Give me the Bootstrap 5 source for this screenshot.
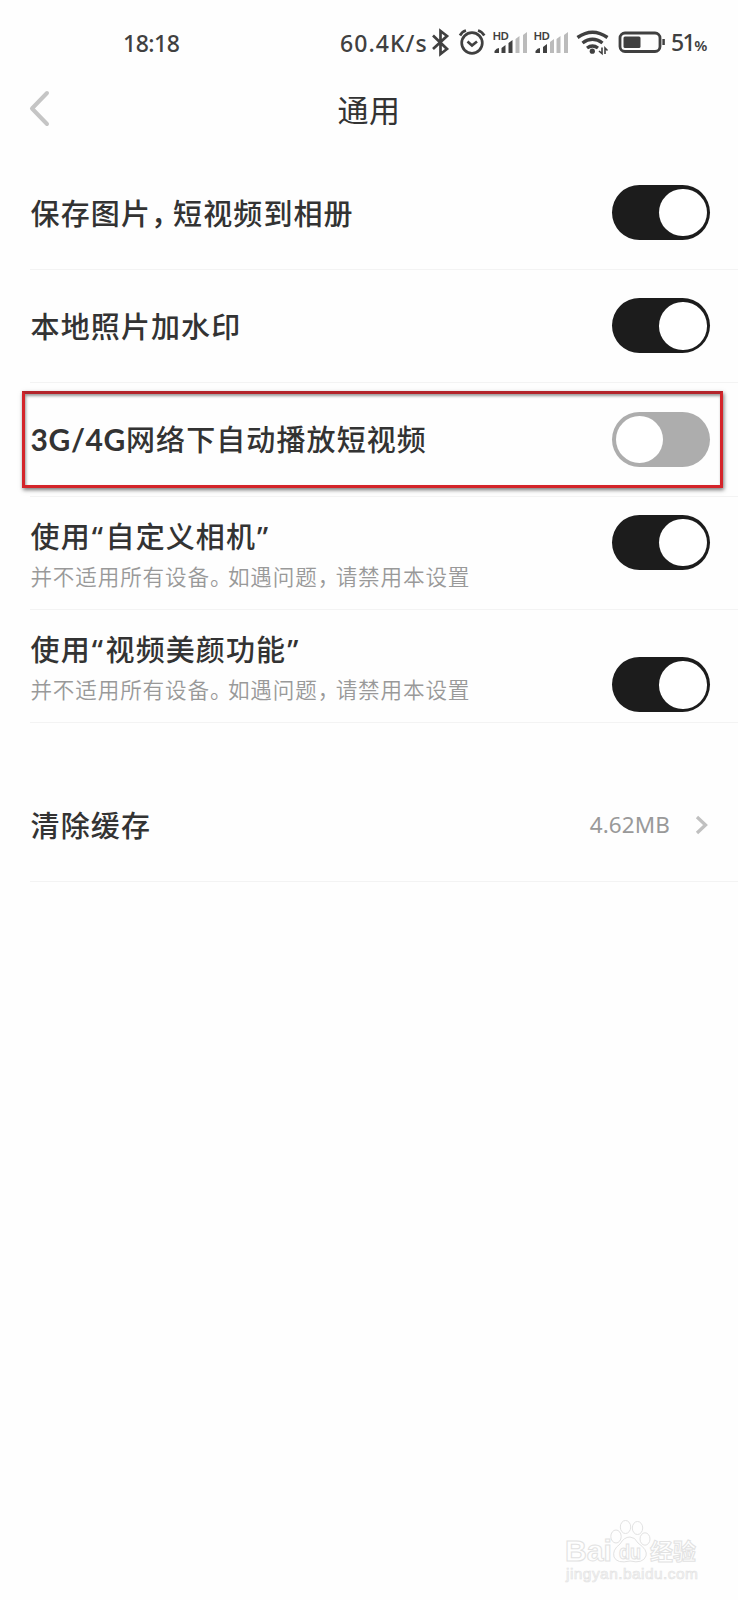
<!DOCTYPE html>
<html lang="zh-CN">
<head>
<meta charset="utf-8">
<meta name="viewport" content="width=device-width, initial-scale=1">
<title>通用</title>
<link href="https://cdn.jsdelivr.net/npm/bootstrap@5.3.0/dist/css/bootstrap.min.css" rel="stylesheet">
<style>
body{background:#fefefe;color:#333;font-family:"Noto Sans","Noto Sans CJK SC",sans-serif}
.screen{width:738px;height:1600px}
.statusbar{height:86px;padding-left:123px;color:#404040;font-size:23px;font-weight:500;line-height:84px}
.clock{width:217px;letter-spacing:-.5px}
.rate{letter-spacing:1.05px;width:90px}
.pct{letter-spacing:-1.6px;font-size:23px;margin-left:6px}
.pct small{font-size:15px;font-weight:600}
.titlebar{height:70.4px;padding-left:29px}
.page-title{left:0;right:0;font-size:31px;line-height:48px;top:0;letter-spacing:.4px}
.setting{height:113.4px;margin-left:30px;padding-right:28px;border-bottom:1.5px solid #f3f3f3}
.label{font:500 29px/44px "Noto Sans CJK SC",sans-serif;letter-spacing:1.1px;white-space:nowrap;padding-left:.6px;padding-bottom:2px}
.latin{font-family:Lato,sans-serif;font-weight:700;font-size:30px;letter-spacing:.6px}
.quote-mark{font-family:"Noto Sans",sans-serif;letter-spacing:2.6px;padding-left:1px}
.hint{font:350 21.6px/32px "Noto Sans CJK SC",sans-serif;letter-spacing:.84px;color:#999;white-space:nowrap;margin-top:-1px;padding-left:.4px}
.tight{font-feature-settings:"halt";margin-right:6.5px}
.tight-sm{font-feature-settings:"halt";margin-right:6.4px}
.toggle{width:98px;height:55px;border-radius:28px;background:#1c1c1c;padding:0 3.5px}
.toggle.off{background:#adadad}
.camera-toggle{margin-top:18.5px}
.beauty-toggle{margin-bottom:10px}
.knob{width:47.5px;height:47.5px;border-radius:50%;background:#fff}
.highlight{left:22px;top:391px;width:701px;height:97px;border:3px solid #d4242a;border-top-color:#b3242b;box-shadow:1px 2px 4px #0008,inset 1px 2px 3px #0006}
.cache{height:112px;margin-top:46.2px}
.size{font-size:22.5px;color:#999;letter-spacing:.1px}
.watermark{right:34px;bottom:14px}
</style>
</head>
<body>
<main class="screen position-relative overflow-hidden">
  <header class="statusbar d-flex align-items-center">
    <span class="clock">18:18</span><span class="rate">60.4K/s</span>
    <svg width="235" height="36" viewBox="430 25 235 36" fill="none" stroke="#404040" class="flex-shrink-0">
      <path d="M433 35.5 447 49 440.5 54V31L447 36 433 49" stroke-width="2.7"/>
      <circle cx="472" cy="43" r="10.3" stroke-width="2.7"/>
      <path d="m467.5 41.5 4.5 4 5-4" stroke-width="2.7"/>
      <path d="M460 35.5q2-3.8 6-5M478 30.5q4 1.2 6.3 5" stroke-width="2.7"/>
      <g fill="#404040" stroke="none">
        <text x="492.5" y="39.5" font-family="Noto Sans" font-weight="600" font-size="11.5" textLength="16.5">HD</text>
        <path d="M494.500 53v-2q2-3 4.500-3v5zM501.500 53v-5l4-3v8zM508.500 53V43l4-3v13z"/>
      </g>
      <path d="M515.500 53V39l4-3v17zM523 53V35l4-3v21z" fill="#bbb" stroke="none"/>
      <g fill="#404040" stroke="none">
        <text x="533.5" y="39.5" font-family="Noto Sans" font-weight="600" font-size="11.5" textLength="16.5">HD</text>
        <path d="M535.500 53v-2q2-3 4.500-3v5zM543 53v-6l4-3v9z"/>
      </g>
      <path d="M550 53V42l4-3v14zM556.500 53V39l4-3v17zM564 53V35l4-3v21z" fill="#bbb" stroke="none"/>
      <path d="M577.500 37.500q15-10.500 30 0M582.500 43q10-7.500 20 0M587 48q5.500-4 11 0" stroke-width="3.400"/>
      <circle cx="592.300" cy="51.200" r="2.600" fill="#404040" stroke="none"/>
      <path d="M602 47.500v6l-3-2.500M605 54v-6l2.500 2.500" stroke-width="1.600"/>
      <rect x="620" y="33" width="40" height="18.500" rx="5" stroke-width="2.800"/>
      <rect x="623.500" y="36.500" width="17" height="11.500" rx="1.500" fill="#404040" stroke="none"/>
      <path d="M663.600 39v6" stroke-width="2.500"/>
    </svg>
    <span class="pct">51<small>%</small></span>
  </header>

  <div class="titlebar position-relative">
    <svg width="22" height="46" viewBox="0 0 22 46" fill="none" stroke="#c5c5c5" stroke-width="4" stroke-linecap="round" stroke-linejoin="round"><path d="M18 7 3 22.500 18 38"/></svg>
    <h1 class="page-title position-absolute text-center fw-normal m-0">通用</h1>
  </div>

  <section>
    <div class="setting d-flex align-items-center justify-content-between">
      <span class="label">保存图片<span class="tight">，</span>短视频到相册</span>
      <div class="toggle d-flex align-items-center justify-content-end"><div class="knob"></div></div>
    </div>
    <div class="setting d-flex align-items-center justify-content-between">
      <span class="label">本地照片加水印</span>
      <div class="toggle d-flex align-items-center justify-content-end"><div class="knob"></div></div>
    </div>
    <div class="setting d-flex align-items-center justify-content-between">
      <span class="label"><span class="latin">3G/4G</span>网络下自动播放短视频</span>
      <div class="toggle off d-flex align-items-center"><div class="knob"></div></div>
    </div>
    <div class="setting d-flex align-items-start justify-content-between">
      <div class="d-flex flex-column pt-3"><span class="label">使用<span class="quote-mark">“</span>自定义相机<span class="quote-mark">”</span></span><span class="hint">并不适用所有设备<span class="tight-sm">。</span>如遇问题<span class="tight-sm">，</span>请禁用本设置</span></div>
      <div class="toggle camera-toggle d-flex align-items-center justify-content-end"><div class="knob"></div></div>
    </div>
    <div class="setting d-flex align-items-end justify-content-between">
      <div class="d-flex flex-column align-self-start pt-3"><span class="label">使用<span class="quote-mark">“</span>视频美颜功能<span class="quote-mark">”</span></span><span class="hint">并不适用所有设备<span class="tight-sm">。</span>如遇问题<span class="tight-sm">，</span>请禁用本设置</span></div>
      <div class="toggle beauty-toggle d-flex align-items-center justify-content-end"><div class="knob"></div></div>
    </div>
    <div class="setting cache d-flex align-items-center justify-content-between">
      <span class="label">清除缓存</span>
      <div class="d-flex align-items-center"><span class="size">4.62MB</span>
        <svg class="ms-4" width="16" height="22" viewBox="0 0 16 22" fill="none" stroke="#c0c0c0" stroke-width="3.300"><path d="m3 3 8.500 8L3 19"/></svg></div>
    </div>
  </section>
  <div class="highlight position-absolute"></div>
  <svg class="watermark position-absolute" width="140" height="72" viewBox="564 1514 140 72" fill="#fefefe" stroke="#e2e2e2" stroke-width="1">
    <text x="565" y="1561" font-family="Liberation Sans" font-weight="700" font-size="29" textLength="47" lengthAdjust="spacingAndGlyphs">Bai</text>
    <ellipse cx="616" cy="1536.500" rx="5.200" ry="6.500"/><ellipse cx="625.500" cy="1527" rx="5.200" ry="6.500"/><ellipse cx="637.500" cy="1528" rx="5.200" ry="6.500"/><ellipse cx="645" cy="1539" rx="5" ry="6.200"/>
    <path d="M630 1537q5 0 8 6 10 7 8 13-3 8-16 5-13 3-16-4-2-7 6-13 4-7 10-7z"/>
    <text x="619" y="1559" font-family="Liberation Sans" font-weight="700" font-size="20" textLength="22" lengthAdjust="spacingAndGlyphs">du</text>
    <text x="650" y="1560" font-family="Noto Sans CJK SC" font-weight="700" font-size="23" textLength="46">经验</text>
    <text x="566" y="1579" font-family="Liberation Sans" font-size="15.500" textLength="132" fill="#f6f6f6" stroke-width=".6">jingyan.baidu.com</text>
  </svg>
</main>
<script src="https://cdn.jsdelivr.net/npm/bootstrap@5.3.0/dist/js/bootstrap.bundle.min.js"></script>
</body>
</html>
